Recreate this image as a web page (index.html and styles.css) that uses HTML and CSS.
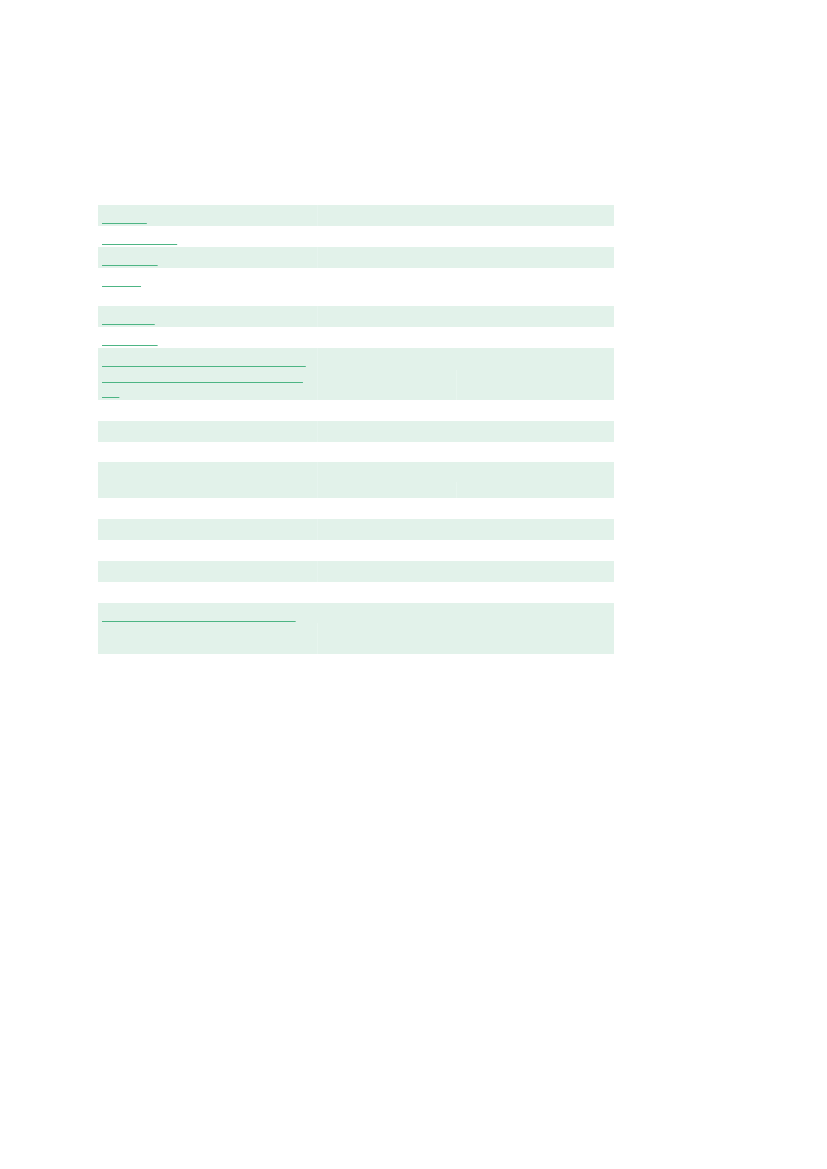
FILE: index.html
```html
<!DOCTYPE html>
<html lang="en">
<head>
<meta charset="utf-8">
<title>Document table</title>
<link rel="stylesheet" href="styles.css">
</head>
<body>
<main class="page">
  <table class="doc-table">
    <colgroup>
      <col class="col-a">
      <col class="col-b">
      <col class="col-c">
    </colgroup>
    <tbody>
      <tr class="shade"><td><a href="#" class="ref">Preface</a></td><td class="mid">Note</td><td>p. 1</td></tr>
      <tr><td><a href="#" class="ref">Study design</a></td><td class="mid">Overview</td><td>p. 2</td></tr>
      <tr class="shade"><td><a href="#" class="ref">Approach</a></td><td class="mid">Design</td><td>p. 4</td></tr>
      <tr class="tall"><td><a href="#" class="ref">Cohort</a></td><td class="mid">Sources and samples</td><td>p. 6</td></tr>
      <tr class="shade"><td><a href="#" class="ref">Analyses</a></td><td class="mid">Findings</td><td>p. 9</td></tr>
      <tr><td><a href="#" class="ref">Summary</a></td><td class="mid">Discussion</td><td>p. 12</td></tr>
      <tr class="shade"><td><a href="#" class="ref">Supplementary tables for the whole longitudinal survey of regional data set</a></td><td class="mid">Appendix</td><td class="split split-30">p. 15</td></tr>
      <tr><td>Item</td><td class="mid">Note</td><td>p. 18</td></tr>
      <tr class="shade"><td>Item</td><td class="mid">Note</td><td>p. 19</td></tr>
      <tr><td>Item</td><td class="mid">Note</td><td>p. 20</td></tr>
      <tr class="shade two"><td>Item</td><td class="mid">Note</td><td class="split split-16">p. 21</td></tr>
      <tr><td>Item</td><td class="mid">Note</td><td>p. 22</td></tr>
      <tr class="shade"><td>Item</td><td class="mid">Note</td><td>p. 23</td></tr>
      <tr><td>Item</td><td class="mid">Note</td><td>p. 24</td></tr>
      <tr class="shade"><td>Item</td><td class="mid">Note</td><td>p. 25</td></tr>
      <tr><td>Item</td><td class="mid">Note</td><td>p. 26</td></tr>
      <tr class="shade three"><td><a href="#" class="ref">References and further literatures</a></td><td class="mid split split-31">Bibliography of cited works and related sources</td><td>Listed in order of appearance in the main text</td></tr>
    </tbody>
  </table>
</main>
</body>
</html>
```

FILE: styles.css
```css
html, body {
  margin: 0;
  padding: 0;
  background: #ffffff;
}

.page {
  padding: 205px 0 0 98px;
  font-family: "Liberation Sans", Arial, sans-serif;
  font-size: 13px;
}

.doc-table {
  width: 516px;
  border-collapse: collapse;
  table-layout: fixed;
}

.col-a { width: 219px; }
.col-b { width: 139px; }
.col-c { width: 158px; }

.doc-table td {
  padding: 3px 4px 2.35px 4px;
  line-height: 15.5px;
  vertical-align: top;
  color: transparent;
}

.doc-table tr.shade td {
  background-color: #e2f2ea;
}

.doc-table tr.shade td.mid {
  box-shadow: inset 1px 0 0 #e6f4ee;
}

.doc-table tr.shade td.mid.split {
  box-shadow: none;
}

.doc-table tr.shade td.split {
  background-image: linear-gradient(#e7f5ee, #e7f5ee);
  background-repeat: no-repeat;
  background-position: left bottom;
  background-size: 1px 30px;
}

.doc-table tr.shade td.split-16 {
  background-size: 1px 16px;
}

.doc-table tr.shade td.split-31 {
  background-size: 1px 31px;
}

.doc-table tr.tall td {
  height: 33.5px;
}

.doc-table tr.two td {
  height: 30.5px;
}

.doc-table tr.three td {
  height: 46.5px;
}

.ref {
  color: transparent;
  text-decoration: underline;
  text-decoration-color: #4db584;
  text-decoration-thickness: 1px;
  text-decoration-skip-ink: none;
  text-underline-offset: 3px;
}
```
